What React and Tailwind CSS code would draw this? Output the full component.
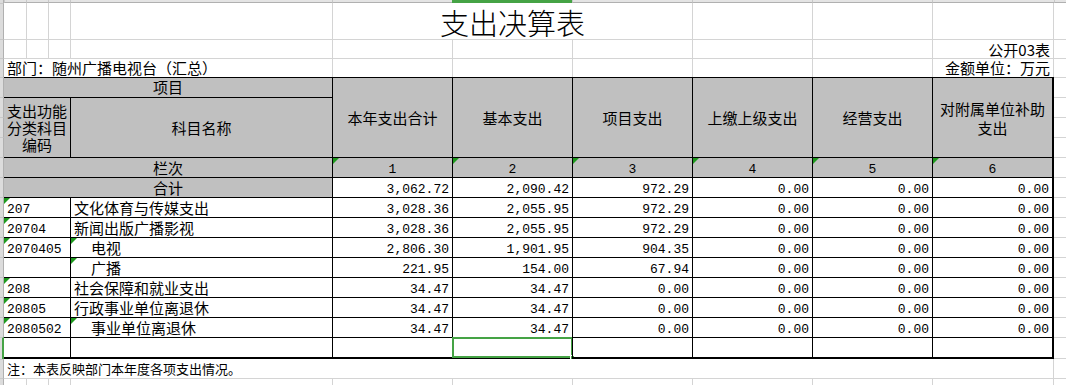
import React from "react";

const CJK = "font-['Noto_Sans_CJK_SC',sans-serif]";
const NUM = "font-['Liberation_Mono','Noto_Sans_CJK_SC',monospace]";
const COLS = "grid-cols-[4px_22px_22px_22px_262px_120px_120px_120px_120px_120px_122px_12px]";

const headers = ["本年支出合计", "基本支出", "项目支出", "上缴上级支出", "经营支出", "对附属单位补助支出"];

const rows = [
  { code: "207", name: "文化体育与传媒支出", v: ["3,028.36", "2,055.95", "972.29"] },
  { code: "20704", name: "新闻出版广播影视", v: ["3,028.36", "2,055.95", "972.29"] },
  { code: "2070405", name: "电视", sub: true, v: ["2,806.30", "1,901.95", "904.35"] },
  { code: "", name: "广播", sub: true, v: ["221.95", "154.00", "67.94"] },
  { code: "208", name: "社会保障和就业支出", v: ["34.47", "34.47", "0.00"] },
  { code: "20805", name: "行政事业单位离退休", v: ["34.47", "34.47", "0.00"] },
  { code: "2080502", name: "事业单位离退休", sub: true, v: ["34.47", "34.47", "0.00"] },
];

const Tri = () => (
  <span className="absolute left-0 top-0 h-0 w-0 border-t-[6px] border-r-[6px] border-t-[#1e9a1e] border-r-transparent" />
);

const Strip = ({ green }) => (
  <div
    className={`border-t border-t-[#c8c8c8] bg-[#dcdcdc] ${
      green ? "border-r-2 border-r-[#45a345]" : "border-r border-r-[#b0b0b0]"
    }`}
  />
);

// empty excel cell outside the table
const G = ({ l = true, t = true, r = false, children, className = "" }) => (
  <div
    className={`border-[#d4d4d4] ${l ? "border-l" : ""} ${t ? "border-t" : ""} ${r ? "border-r" : ""} ${className}`}
  >
    {children}
  </div>
);

const Extra = () => <div className="border-t border-[#d4d4d4]" />;

const Num = ({ v, last, tri, gray, center }) => (
  <div
    className={`relative flex items-center border-l border-t border-black pt-[3px] ${NUM} text-[13px] leading-none ${
      last ? "border-r-2" : ""
    } ${gray ? "bg-[#c0c0c0]" : "bg-white"} ${center ? "justify-center" : "justify-end pr-[3px]"}`}
  >
    {tri && <Tri />}
    {v}
  </div>
);

export default function App() {
  return (
    <div className={`h-[385px] w-[1066px] overflow-hidden bg-white text-black ${CJK} text-[15px]`}>
      {/* column header edge */}
      <div className={`grid h-[3px] ${COLS}`}>
        <div className="border-r border-r-[#b0b0b0] bg-[#dcdcdc]" />
        {Array.from({ length: 11 }).map((_, i) => (
          <div
            key={i}
            className={
              i === 5
                ? "bg-[#45a345]"
                : "border-b border-l border-b-[#b0b0b0] border-l-[#c8c8c8] bg-[#e4e4e4]"
            }
          />
        ))}
      </div>

      <div className={`grid ${COLS} grid-rows-[36px_19px_19px_repeat(13,20px)_22px_19px_20px]`}>
        {/* title */}
        <Strip />
        <G l={false} t={false} />
        <G t={false} />
        <G t={false} />
        <G t={false} />
        <G t={false} className="col-span-3 flex items-end justify-center pb-[2px]">
          <span className="text-[29px] font-light leading-none">支出决算表</span>
        </G>
        <G t={false} />
        <G t={false} />
        <G t={false} r />
        <div />

        {/* 公开03表 */}
        <Strip />
        <G l={false} />
        {Array.from({ length: 8 }).map((_, i) => (
          <G key={i} />
        ))}
        <G r className="flex items-end justify-end pr-[3px] leading-[17px]">
          公开03表
        </G>
        <Extra />

        {/* 部门 */}
        <Strip />
        <G l={false} className="col-span-4 flex items-end pb-px pl-[3px] leading-[17px]">
          部门：随州广播电视台（汇总）
        </G>
        {Array.from({ length: 5 }).map((_, i) => (
          <G key={i} />
        ))}
        <G r className="flex items-end justify-end pb-px pr-[3px] leading-[17px]">
          金额单位：万元
        </G>
        <Extra />

        {/* header */}
        <Strip />
        <div className="col-span-4 flex items-center justify-center border-t border-black bg-[#c0c0c0]">
          项目
        </div>
        {headers.map((h, i) => (
          <div
            key={h}
            className={`row-span-4 flex items-center justify-center border-l border-t border-black bg-[#c0c0c0] text-center leading-[19px] ${
              i === 5 ? "border-r-2" : ""
            }`}
          >
            {i === 5 ? (
              <span>
                对附属单位补助
                <br />
                支出
              </span>
            ) : (
              h
            )}
          </div>
        ))}
        <Extra />

        <Strip />
        <div className="col-span-3 row-span-3 flex items-center justify-center border-t border-black bg-[#c0c0c0] text-center leading-[17px]">
          <span>
            支出功能
            <br />
            分类科目
            <br />
            编码
          </span>
        </div>
        <div className="row-span-3 flex items-center justify-center border-l border-t border-black bg-[#c0c0c0] pt-[2px]">
          科目名称
        </div>
        <Extra />
        <Strip />
        <Extra />
        <Strip />
        <Extra />

        {/* 栏次 */}
        <Strip />
        <div className="col-span-4 flex items-center justify-center border-t border-black bg-[#c0c0c0] pt-[2px]">
          栏次
        </div>
        {[1, 2, 3, 4, 5, 6].map((n) => (
          <Num key={n} v={n} tri gray center last={n === 6} />
        ))}
        <Extra />

        {/* 合计 */}
        <Strip />
        <div className="col-span-4 flex items-center justify-center border-t border-black bg-[#c0c0c0] pt-[2px]">
          合计
        </div>
        {["3,062.72", "2,090.42", "972.29", "0.00", "0.00", "0.00"].map((v, i) => (
          <Num key={i} v={v} last={i === 5} />
        ))}
        <Extra />

        {rows.map((r, idx) => (
          <React.Fragment key={idx}>
            <Strip />
            <div className={`relative col-span-3 flex items-center border-t border-black pl-[3px] pt-[3px] ${NUM} text-[13px] leading-none`}>
              {r.code && <Tri />}
              {r.code}
            </div>
            <div
              className={`relative flex items-center border-l border-t border-black leading-none ${
                r.sub ? "pl-[20px]" : "pl-[3px]"
              }`}
            >
              {r.sub && <Tri />}
              {r.name}
            </div>
            {[...r.v, "0.00", "0.00", "0.00"].map((v, i) => (
              <Num key={i} v={v} last={i === 5} />
            ))}
            <Extra />
          </React.Fragment>
        ))}

        {/* empty last row with selected cell */}
        <Strip green />
        <div className="col-span-3 border-b-2 border-t border-black" />
        <div className="border-b-2 border-l border-t border-black" />
        {[0, 1, 2, 3, 4, 5].map((i) => (
          <div
            key={i}
            className={`relative border-b-2 border-l border-t border-black ${i === 5 ? "border-r-2" : ""}`}
          >
            {i === 1 && (
              <>
                <span className="absolute -bottom-px -left-px -right-px -top-px border-2 border-[#45a345]" />
                <span className="absolute -bottom-[3px] -right-[3px] h-[5px] w-[5px] border border-white bg-[#45a345]" />
              </>
            )}
          </div>
        ))}
        <div className="border-b border-t border-[#d4d4d4]" />

        {/* note */}
        <Strip />
        <G l={false} t={false} r className="col-span-10 flex items-center pl-[3px] text-[13px] leading-none">
          注：本表反映部门本年度各项支出情况。
        </G>
        <div />

        <Strip />
        <G l={false} />
        {Array.from({ length: 8 }).map((_, i) => (
          <G key={i} />
        ))}
        <G r />
        <Extra />
      </div>
    </div>
  );
}
